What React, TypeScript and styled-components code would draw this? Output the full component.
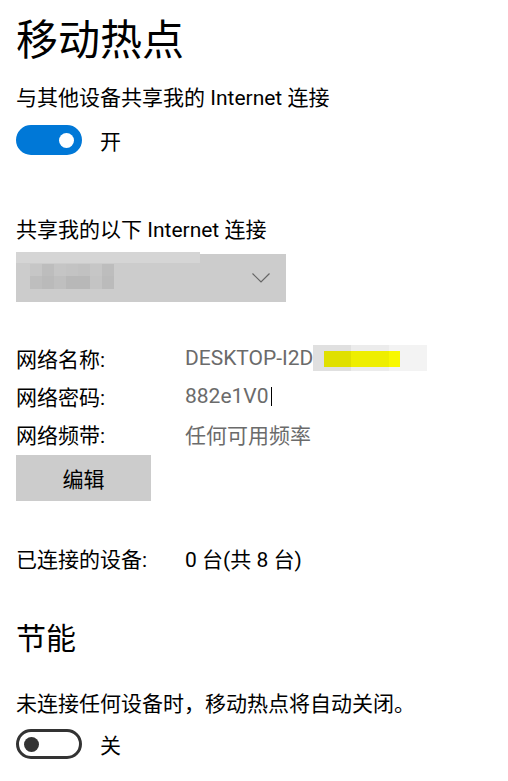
import React from "react";
import styled, { createGlobalStyle } from "styled-components";

const Global = createGlobalStyle`
  html, body { margin: 0; padding: 0; background: #ffffff; }
  body {
    font-family: Roboto, "Noto Sans CJK SC", sans-serif;
    color: #000000;
  }
`;

const Page = styled.div`
  width: 508px;
  height: 781px;
  box-sizing: border-box;
  padding: 13px 16px 0 16px;
  display: flex;
  flex-direction: column;
  overflow: hidden;
`;

const Title = styled.h1`
  margin: 0;
  font-size: 42px;
  font-weight: 400;
  line-height: 56px;
  letter-spacing: 0;
`;

const Heading = styled.h2<{ $top: number }>`
  margin: ${(p) => p.$top}px 0 0 0;
  font-size: 30px;
  font-weight: 400;
  line-height: 40px;
`;

const Text = styled.div<{ $top: number }>`
  margin-top: ${(p) => p.$top}px;
  font-size: 21px;
  line-height: 30px;
`;

const ToggleRow = styled.div<{ $top: number }>`
  margin-top: ${(p) => p.$top}px;
  display: flex;
  align-items: center;
  gap: 18px;
  height: 30px;
  font-size: 21px;
`;

const Track = styled.div<{ $on: boolean }>`
  width: 66px;
  height: 30px;
  box-sizing: border-box;
  border-radius: 15px;
  border: 3px solid ${(p) => (p.$on ? "#0078d7" : "#333333")};
  background: ${(p) => (p.$on ? "#0078d7" : "#ffffff")};
  display: flex;
  align-items: center;
  justify-content: ${(p) => (p.$on ? "flex-end" : "flex-start")};
  padding: 0 5px;
`;

const Knob = styled.div<{ $on: boolean }>`
  width: 15px;
  height: 15px;
  border-radius: 50%;
  background: ${(p) => (p.$on ? "#ffffff" : "#333333")};
`;

const Select = styled.div`
  margin-top: 9px;
  position: relative;
  width: 270px;
  height: 48px;
  background: #cccccc;
  display: flex;
  align-items: center;
  justify-content: flex-end;
  padding-right: 16px;
  box-sizing: border-box;
`;

const BlurStrip = styled.div`
  position: absolute;
  left: 0;
  top: -2px;
  width: 184px;
  height: 11px;
  background: #d5d5d5;
`;

const BlurGrid = styled.div`
  position: absolute;
  left: 14px;
  top: 10px;
  display: grid;
  grid-template-columns: repeat(7, 12px);
  grid-template-rows: 12px 13px;
`;

const Pix = styled.div<{ $c: string }>`
  background: ${(p) => p.$c};
`;

const InfoList = styled.div`
  margin-top: 37px;
  display: flex;
  flex-direction: column;
`;

const InfoRow = styled.div<{ $top?: number }>`
  margin-top: ${(p) => p.$top ?? 0}px;
  display: grid;
  grid-template-columns: 169px auto;
  align-items: center;
  height: 38px;
  font-size: 21px;
`;

const Label = styled.span`
  color: #000000;
`;

const Value = styled.span<{ $dark?: boolean }>`
  color: ${(p) => (p.$dark ? "#000000" : "#6b6b6b")};
  display: flex;
  align-items: center;
`;

const Caret = styled.span`
  width: 1px;
  height: 19px;
  background: #000000;
  margin-left: 2px;
`;

const Redact = styled.span`
  position: relative;
  display: inline-flex;
  height: 26px;
  margin-left: 0;
`;

const RedSeg = styled.span<{ $c: string }>`
  width: 38px;
  height: 100%;
  background: ${(p) => p.$c};
`;

const Yellow = styled.span`
  position: absolute;
  left: 11px;
  top: 6px;
  height: 16px;
  display: flex;
`;

const YSeg = styled.span<{ $c: string; $w: number }>`
  width: ${(p) => p.$w}px;
  background: ${(p) => p.$c};
`;

const Button = styled.button`
  margin-top: 2px;
  width: 135px;
  height: 46px;
  border: none;
  background: #cccccc;
  font-family: inherit;
  font-size: 21px;
  color: #000000;
  padding: 0;
`;

const pixels = [
  "#c6c6c6", "#bdbdbd", "#c5c5c5", "#c3c3c3", "#c1c1c1", "#c6c6c6", "#bdbdbd",
  "#bebebe", "#bababa", "#bfbfbf", "#b8b8b8", "#b8b8b8", "#c4c4c4", "#bbbbbb",
];

const Chevron = () => (
  <svg width="18" height="10" viewBox="0 0 18 10">
    <polyline points="0.5,0.5 9,9 17.5,0.5" fill="none" stroke="#666666" strokeWidth="1.2" />
  </svg>
);

export default function App() {
  return (
    <>
      <Global />
      <Page>
        <Title>移动热点</Title>
        <Text $top={14}>与其他设备共享我的 Internet 连接</Text>
        <ToggleRow $top={12}>
          <Track $on>
            <Knob $on />
          </Track>
          <span>开</span>
        </ToggleRow>
        <Text $top={60}>共享我的以下 Internet 连接</Text>
        <Select>
          <BlurStrip />
          <BlurGrid>
            {pixels.map((c, i) => (
              <Pix key={i} $c={c} />
            ))}
          </BlurGrid>
          <Chevron />
        </Select>
        <InfoList>
          <InfoRow>
            <Label>网络名称:</Label>
            <Value>
              DESKTOP-I2D
              <Redact>
                <RedSeg $c="#e0e0e0" />
                <RedSeg $c="#ececec" />
                <RedSeg $c="#f3f3f3" />
                <Yellow>
                  <YSeg $c="#e0e000" $w={27} />
                  <YSeg $c="#eeee00" $w={38} />
                  <YSeg $c="#f8f800" $w={11} />
                </Yellow>
              </Redact>
            </Value>
          </InfoRow>
          <InfoRow>
            <Label>网络密码:</Label>
            <Value>
              882e1V0<Caret />
            </Value>
          </InfoRow>
          <InfoRow>
            <Label>网络频带:</Label>
            <Value>任何可用频率</Value>
          </InfoRow>
        </InfoList>
        <Button>编辑</Button>
        <InfoRow $top={38}>
          <Label>已连接的设备:</Label>
          <Value $dark>0 台(共 8 台)</Value>
        </InfoRow>
        <Heading $top={42}>节能</Heading>
        <Text $top={30}>未连接任何设备时，移动热点将自动关闭。</Text>
        <ToggleRow $top={10}>
          <Track $on={false}>
            <Knob $on={false} />
          </Track>
          <span>关</span>
        </ToggleRow>
      </Page>
    </>
  );
}
